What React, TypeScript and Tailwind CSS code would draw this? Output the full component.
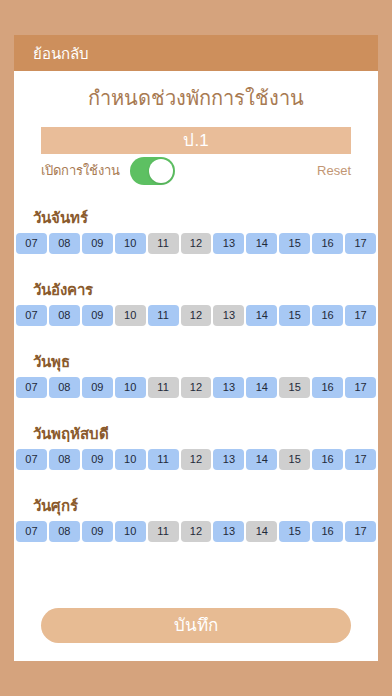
import { useState } from "react";

const hours = ["07", "08", "09", "10", "11", "12", "13", "14", "15", "16", "17"];

// ชั่วโมงที่พัก (สีเทา)
const days: { name: string; off: string[] }[] = [
  { name: "วันจันทร์", off: ["11", "12"] },
  { name: "วันอังคาร", off: ["10", "12", "13"] },
  { name: "วันพุธ", off: ["11", "12", "15"] },
  { name: "วันพฤหัสบดี", off: ["12", "15"] },
  { name: "วันศุกร์", off: ["11", "12", "14"] },
];

export default function App() {
  const [enabled, setEnabled] = useState(true);

  return (
    <div
      className="w-[392px] h-[696px] bg-[#d5a37d] pt-[35px] px-[14px] overflow-hidden"
      style={{ fontFamily: '"Liberation Sans", "Noto Sans", sans-serif' }}
    >
      {/* Header ---------------------- */}
      <div className="h-[36px] bg-[#cd8f5c] flex items-center px-[19px]">
        <span className="text-white text-[15px] leading-none">ย้อนกลับ</span>
      </div>

      {/* Card body ------------------- */}
      <div className="h-[590px] bg-white flex flex-col">
        <h1 className="mt-[13px] text-center text-[20px] leading-[28px] text-[#a87a52]">
          กำหนดช่วงพักการใช้งาน
        </h1>

        <div className="mt-[15px] mx-[27px] h-[27px] bg-[#e9bd99] flex items-center justify-center">
          <span className="text-white text-[17px] leading-none">ป.1</span>
        </div>

        <div className="mt-[3px] mx-[27px] h-[28px] flex items-center">
          <span className="text-[13px] text-[#a87a52] mr-[10px]">เปิดการใช้งาน</span>
          <button
            onClick={() => setEnabled(!enabled)}
            className={
              "w-[45px] h-[28px] rounded-full p-[2px] flex " +
              (enabled ? "bg-[#5dc062] justify-end" : "bg-gray-300 justify-start")
            }
          >
            <span className="w-[24px] h-[24px] rounded-full bg-white shadow" />
          </button>
          <span className="ml-auto text-[13px] text-[#c29674]">Reset</span>
        </div>

        {days.map((d, i) => (
          <div key={d.name} className={i === 0 ? "mt-[23px]" : "mt-[26px]"}>
            <div className="px-[19px] h-[20px] flex items-center text-[15px] font-bold text-[#8a5a2c]">
              {d.name}
            </div>
            <div className="mt-[5px] px-[2px] grid grid-cols-11 gap-[2px]">
              {hours.map((h) => (
                <div
                  key={h}
                  className={
                    "h-[21px] rounded-[4px] flex items-center justify-center text-[11px] text-[#1f2a3a] " +
                    (d.off.includes(h) ? "bg-[#cfcfcf]" : "bg-[#a7c8f4]")
                  }
                >
                  {h}
                </div>
              ))}
            </div>
          </div>
        ))}

        <button className="mt-auto mb-[18px] mx-[27px] h-[35px] rounded-full bg-[#e7bb93] text-white text-[17px]">
          บันทึก
        </button>
      </div>
    </div>
  );
}
